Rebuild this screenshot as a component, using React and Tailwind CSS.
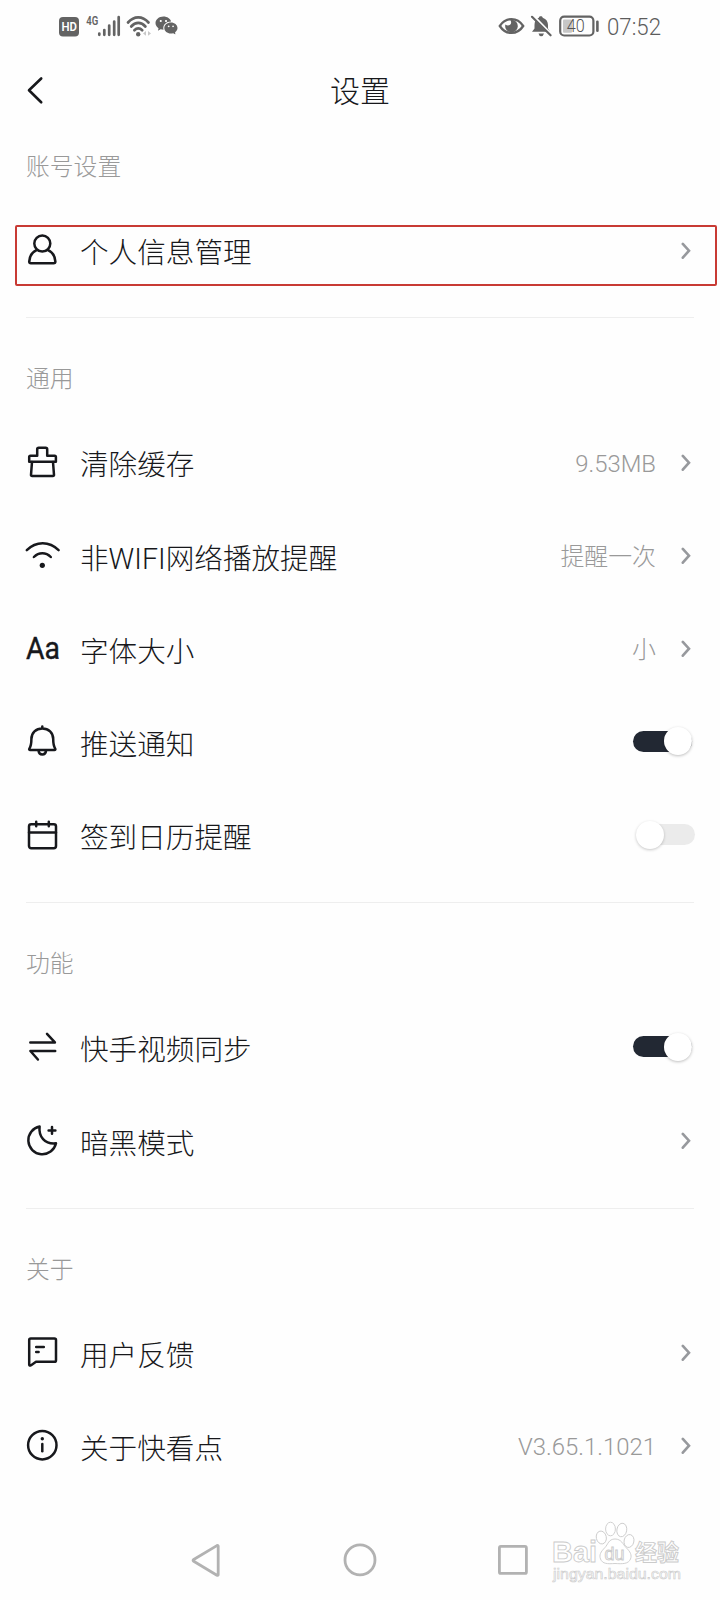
import React from "react";
import { RiWechatFill } from "react-icons/ri";

function Icon({ children }) {
  return (
    <svg
      className="h-9 w-9 shrink-0 overflow-visible"
      viewBox="0 0 36 36"
      fill="none"
      stroke="#17181c"
      strokeWidth="2.5"
      strokeLinecap="round"
      strokeLinejoin="round"
    >
      {children}
    </svg>
  );
}

const UserIcon = () => (
  <Icon>
    <circle cx="18.3" cy="10.6" r="8" />
    <path d="M12.6 17.2C8.2 19.2 5.4 23.6 5.2 28.6c0 1.2.7 1.7 1.8 1.7h22.6c1.100 0 1.800-.5 1.800-1.700-.2-5-3-9.400-7.400-11.400" />
  </Icon>
);
const BrushIcon = () => (
  <Icon>
    <path d="M5.200 16.700v-4.600q0-1.300 1.300-1.300h6.700V4.400q0-1.600 1.600-1.600h6.800q1.600 0 1.600 1.600v6.400h7.400q1.300 0 1.300 1.300v4.600z" />
    <path d="M8 17 7 29.800q-.1 1.200 1.100 1.200h20.800q1.200 0 1.100-1.200L29 17" />
  </Icon>
);
const WifiIcon = () => (
  <Icon>
    <path d="M2.800 12.200c9.300-9.200 22.500-9.200 31.800 0M9.900 19c4.900-5 12-5 16.900 0" />
    <circle cx="18.300" cy="27.300" r="2.600" fill="#17181c" stroke="none" />
  </Icon>
);
const BellIcon = () => (
  <Icon>
    <path d="M7.400 15C7.400 8.600 12 4.400 18.300 4.400S29.200 8.600 29.200 15c0 5 .7 7.700 2 9.600.5.900.1 1.400-.8 1.400H6.200c-.9 0-1.300-.5-.8-1.400 1.300-1.900 2-4.600 2-9.600zM18.300 2.600v1.600" />
    <path d="M14.600 26.800c.2 2.300 1.700 3.600 3.700 3.600s3.500-1.300 3.700-3.600" />
  </Icon>
);
const CalendarIcon = () => (
  <Icon>
    <rect x="5" y="6.200" width="27" height="24" rx="2.200" />
    <path d="M5 14.600h27M12.200 3.800v4.400M24.800 3.800v4.400" />
  </Icon>
);
const SyncIcon = () => (
  <Icon>
    <path d="M6.300 12.400h24.600L23 3.900M31.200 21H6.400l7.500 8.500" />
  </Icon>
);
const MoonIcon = () => (
  <Icon>
    <path d="M15.600 3.500c-1.200 10 5 18 16.400 16.800A14 14 0 1 1 15.600 3.500z" />
    <path d="M28 4v6.800M24.600 7.400h6.800" />
  </Icon>
);
const FeedbackIcon = () => (
  <Icon>
    <path d="M5.200 29.600V5q0-1.600 1.600-1.600h23.600Q32 3.400 32 5v20.200q0 1.600-1.600 1.600H12l-4.900 3.400q-1.900 1-1.900-.6z" />
    <path d="M12.200 12h7.600M12.200 17h2.400" />
  </Icon>
);
const InfoIcon = () => (
  <Icon>
    <circle cx="18.300" cy="17.200" r="14.200" />
    <path d="M18.300 16v7.200" />
    <circle cx="18.300" cy="10.700" r="1.700" fill="#17181c" stroke="none" />
  </Icon>
);
const FontIcon = () => (
  <span className="flex h-9 w-9 shrink-0 items-center pl-px">
    <svg className="h-9 w-[38px] shrink-0 overflow-visible" viewBox="0 0 38 36">
      <text x="1" y="27.500" fontFamily="Roboto" fontWeight="400" fontSize="32" textLength="34" lengthAdjust="spacingAndGlyphs" fill="#17181c" stroke="#17181c" strokeWidth=".4">Aa</text>
    </svg>
  </span>
);

function Chevron() {
  return (
    <svg className="ml-[26px] mr-[3px] h-[18px] w-[10px]" viewBox="0 0 10 18" fill="none" stroke="#97999d" strokeWidth="2.600" strokeLinecap="round">
      <path d="M1.800 1.900 8 8.700l-6.200 7" />
    </svg>
  );
}

function Toggle({ on }) {
  return on ? (
    <div className="mb-[2px] mr-[2px] flex h-[21px] w-[59px] items-center justify-end rounded-full bg-[#222833]">
      <div className="size-7 shrink-0 rounded-full bg-white shadow-[0_1px_3px_rgba(0,0,0,0.25)]" />
    </div>
  ) : (
    <div className="mb-[2px] -mr-px flex h-[21px] w-[59px] items-center rounded-full bg-[#ebebeb]">
      <div className="size-7 shrink-0 rounded-full bg-white shadow-[0_1px_3px_rgba(0,0,0,0.22)]" />
    </div>
  );
}

function Row({ icon, label, value, toggle, highlighted }) {
  return (
    <div className="relative flex h-[93.200px] items-center">
      <div className="-ml-0.5 flex">{icon}</div>
      <span className="ml-5 pt-[6px] text-[28.600px] leading-none tracking-[0.02px] text-[#17181b]">{label}</span>
      <div className="ml-auto flex items-center">
        {value && <span className="-mr-px pt-[4px] text-[23.900px] leading-none text-[#999]">{value}</span>}
        {toggle ? <Toggle on={toggle === "on"} /> : <Chevron />}
      </div>
      {highlighted && <div className="absolute -left-[11px] top-[21px] h-[61px] w-[702px] rounded-[2px] border-2 border-[#c83a34]" />}
    </div>
  );
}

function Section({ title, last, children }) {
  return (
    <section className={last ? "mx-[26px]" : "mx-[26px] border-b border-[#eeeeee] pb-5"}>
      <h2 className="h-[98px] pt-[45px] text-[23.800px] leading-8 text-[#999]">{title}</h2>
      {children}
    </section>
  );
}

function StatusBar() {
  return (
    <div className="h-[52px] shrink-0">
      <svg className="h-[52px] w-[720px]" viewBox="0 0 720 52" fill="none">
        <rect x="59" y="17" width="20" height="19.500" rx="4" fill="#636363" />
        <text x="61.500" y="31.300" fontFamily="Roboto" fontWeight="600" fontSize="12.500" textLength="15.500" lengthAdjust="spacingAndGlyphs" fill="#fff">HD</text>
        <text x="86.300" y="25" fontFamily="Roboto" fontWeight="600" fontSize="12.500" textLength="12" lengthAdjust="spacingAndGlyphs" fill="#636363">4G</text>
        <path d="M99.300 33.500v1.300M104.300 30v4.800M109.200 25.500v9.300M114.200 21.500v13.300M118.700 17.200v17.600" stroke="#636363" strokeWidth="2.700" strokeLinecap="round" />
        <g stroke="#636363" strokeWidth="2.700" strokeLinecap="round">
          <path d="M128 22.500c6-6.800 14.500-6.800 20.500 0M131.200 26.500c4.200-4.700 10-4.700 14.200 0M134.400 30.300c2.400-2.500 5.400-2.500 7.800 0" />
        </g>
        <circle cx="138.200" cy="34.300" r="2.200" fill="#636363" />
        <path d="m146 31-3 2.400 3 2.400zM148 31l3 2.400-3 2.400z" fill="#c8c8c8" />
        <RiWechatFill x="154.500" y="13.500" size={24} color="#636363" />

        <path d="M499.800 26c6-9.200 17.400-9.200 23.400 0-6 9.200-17.400 9.200-23.400 0z" stroke="#636363" strokeWidth="2.300" />
        <path d="M511.500 19.800a6.300 6.300 0 1 1-6.100 4.700q2.400 2 4.700.3 2-2 .2-4.900z" fill="#636363" />
        <path d="M540.700 16.200c1.400 0 2 .7 2 1.500 3.600 1.100 5.300 3.900 5.300 7.300v3.400l2 3.400H532l2.500-3.400V25c0-3.600 1.400-6.200 4.400-7.300 0-.8.600-1.500 1.800-1.500z" fill="#636363" />
        <path d="M538.500 33.500h5.500q-.8 2.800-2.800 2.800t-2.700-2.800z" fill="#636363" />
        <path d="m533.300 15.500 18.200 18.700" stroke="#fff" strokeWidth="2" />
        <path d="m532 16.800 18.600 18.500" stroke="#636363" strokeWidth="2.200" strokeLinecap="round" />
        <rect x="560.200" y="16.700" width="33.200" height="18.800" rx="4" stroke="#636363" strokeWidth="2.200" />
        <rect x="563" y="19.500" width="9" height="13.300" rx="1" fill="#c6c6c6" />
        <text x="566.800" y="32.200" fontFamily="Roboto" fontWeight="300" fontSize="17.500" textLength="18" lengthAdjust="spacingAndGlyphs" fill="#555">40</text>
        <path d="M597.400 21.800v9" stroke="#636363" strokeWidth="2.600" strokeLinecap="round" />
        <text x="607" y="35.400" fontFamily="Roboto" fontWeight="300" fontSize="23.500" textLength="54" lengthAdjust="spacingAndGlyphs" fill="#5c5c5c">07:52</text>
      </svg>
    </div>
  );
}

function Watermark() {
  return (
    <svg className="absolute left-[545px] top-[1515px] h-[75px] w-[145px]" viewBox="545 1515 145 75" fill="#fff" stroke="#cbcbcb" strokeWidth=".9" fontFamily="'Liberation Sans', 'Noto Sans CJK SC', sans-serif" fontWeight="700">
      <text x="552" y="1562" fontSize="29" textLength="45" lengthAdjust="spacingAndGlyphs">Bai</text>
      <ellipse cx="601.300" cy="1537.500" rx="5" ry="6.500" transform="rotate(-12 601.300 1537.500)" />
      <ellipse cx="610.500" cy="1529" rx="4.900" ry="6.800" />
      <ellipse cx="621.800" cy="1530" rx="4.900" ry="6.800" transform="rotate(10 621.800 1530)" />
      <ellipse cx="629" cy="1541" rx="4.900" ry="6.500" transform="rotate(12 629 1541)" />
      <path d="M615 1539c6.500 0 8 5.500 11 8.500 4.500 4.500 6 7.500 4.500 11.500-2 5-8 5-15.500 4.500-7.500.5-12.500.5-14.500-4.500-1.500-4 0-7 4.500-11.500 3-3 3.500-8.500 10-8.500z" />
      <text x="604.500" y="1559.500" fontSize="18" fontWeight="400" textLength="20" lengthAdjust="spacingAndGlyphs">du</text>
      <text x="635" y="1560" fontSize="22" textLength="44" lengthAdjust="spacingAndGlyphs">经验</text>
      <text x="553" y="1579" fontSize="15" fontWeight="400" textLength="128" lengthAdjust="spacingAndGlyphs" strokeWidth=".6">jingyan.baidu.com</text>
    </svg>
  );
}

export default function App() {
  return (
    <div className="relative flex h-[1600px] w-[720px] flex-col overflow-hidden bg-[#fefefe] font-['Roboto','Noto_Sans_CJK_SC',sans-serif] font-light">
      <StatusBar />
      <header className="mt-[22px] grid h-8 shrink-0 grid-cols-[1fr_auto_1fr] items-center px-[26px]">
        <svg className="h-8 w-5" viewBox="0 0 20 32" fill="none" stroke="#17181b" strokeWidth="2.600" strokeLinecap="round" strokeLinejoin="round">
          <path d="M15.200 3.500 3 15.300l12.200 12" />
        </svg>
        <h1 className="pt-[3px] text-[30px] leading-none text-[#17181b]">设置</h1>
      </header>

      <Section title="账号设置">
        <Row icon={<UserIcon />} label="个人信息管理" highlighted />
      </Section>
      <Section title="通用">
        <Row icon={<BrushIcon />} label="清除缓存" value="9.53MB" />
        <Row icon={<WifiIcon />} label="非WIFI网络播放提醒" value="提醒一次" />
        <Row icon={<FontIcon />} label="字体大小" value="小" />
        <Row icon={<BellIcon />} label="推送通知" toggle="on" />
        <Row icon={<CalendarIcon />} label="签到日历提醒" toggle="off" />
      </Section>
      <Section title="功能">
        <Row icon={<SyncIcon />} label="快手视频同步" toggle="on" />
        <Row icon={<MoonIcon />} label="暗黑模式" />
      </Section>
      <Section title="关于" last>
        <Row icon={<FeedbackIcon />} label="用户反馈" />
        <Row icon={<InfoIcon />} label="关于快看点" value="V3.65.1.1021" />
      </Section>

      <nav className="mt-auto flex h-20 shrink-0 items-center justify-between pl-[188px] pr-[190px]">
        <svg className="size-9" viewBox="0 0 36 36" fill="none" stroke="#b2b2b2" strokeWidth="2.800" strokeLinejoin="round">
          <path d="M30.200 4.200v28.400q-.1 1.200-1.300.6L5.700 19.300q-1.300-.9 0-1.800L28.900 3.600q1.200-.6 1.300.6z" />
        </svg>
        <svg className="size-9" viewBox="0 0 36 36" fill="none" stroke="#b2b2b2" strokeWidth="2.800">
          <circle cx="19" cy="17.900" r="15" />
        </svg>
        <svg className="size-9" viewBox="0 0 36 36" fill="none" stroke="#b2b2b2" strokeWidth="2.800">
          <rect x="5.400" y="4.400" width="27" height="27" rx="1.500" />
        </svg>
      </nav>
      <Watermark />
    </div>
  );
}
